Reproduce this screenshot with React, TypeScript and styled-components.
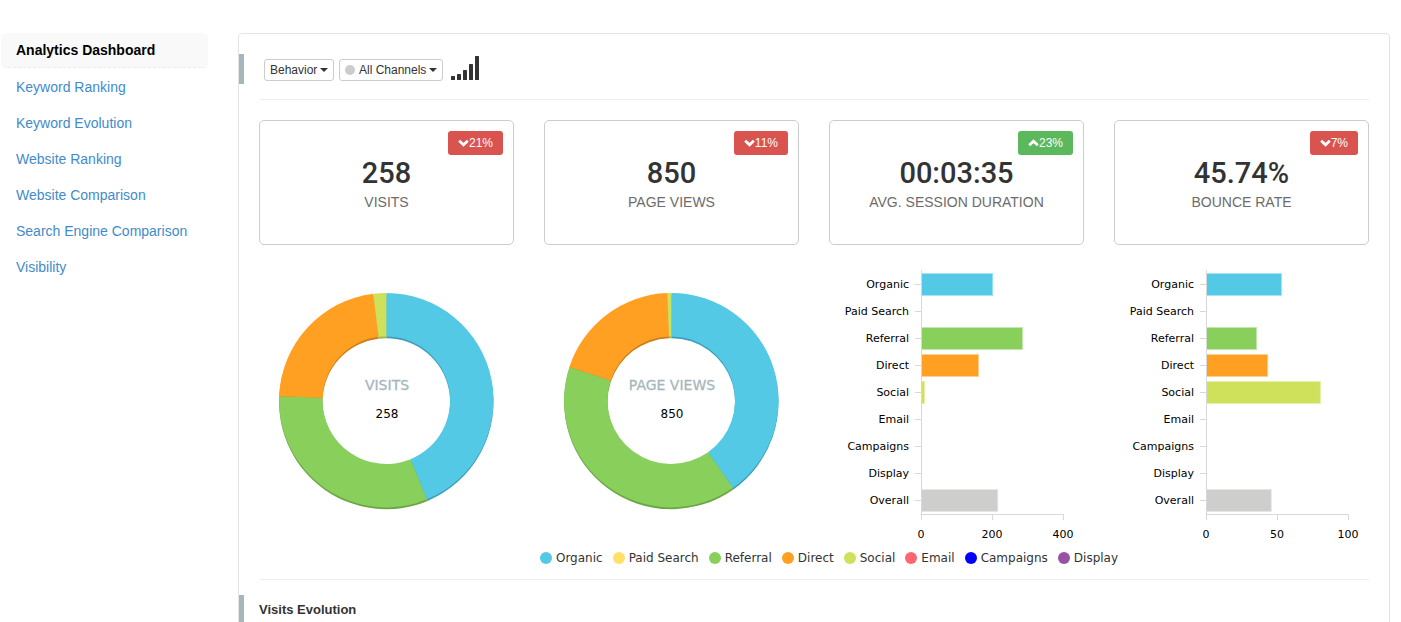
import React from "react";
import styled, { createGlobalStyle } from "styled-components";

const colors = {
  organic: "#53c9e6",
  paid: "#ffe168",
  referral: "#88cf5c",
  direct: "#ffa022",
  social: "#cfe05b",
  email: "#ff6672",
  campaigns: "#0000ff",
  display: "#9752a3",
  overall: "#cececc",
  slate: "#a5b7bd",
  axis: "#d8d8d8",
};

const chartFont = '"DejaVu Sans", Verdana, sans-serif';

const GlobalStyle = createGlobalStyle`
  *, *::before, *::after { box-sizing: border-box; }
  body {
    margin: 0;
    background: #fff;
    color: #333;
    font: 14px/20px "Liberation Sans", Arial, sans-serif;
  }
`;

const Shell = styled.div`
  display: flex;
  height: 100vh;
  overflow-y: auto;
  scrollbar-width: none;
  padding: 33px 11px 0 1px;
  gap: 30px;
`;

const Sidebar = styled.nav`
  flex: 0 0 207px;
`;

const NavList = styled.ul`
  display: grid;
  gap: 1px;
  list-style: none;
  margin: 0;
  padding: 0;
`;

const NavLink = styled.a<{ $active?: boolean }>`
  display: flex;
  align-items: center;
  height: 35px;
  padding: 0 15px;
  border-radius: 5px;
  border-bottom: ${(p) => (p.$active ? "1px dashed #ececec" : "0")};
  background: ${(p) => (p.$active ? "#f9f9f9" : "transparent")};
  color: ${(p) => (p.$active ? "#000" : "#428bca")};
  font-weight: ${(p) => (p.$active ? 700 : 400)};
  text-decoration: none;
`;

const Panel = styled.main`
  flex: 1;
  min-width: 0;
  height: max-content;
  padding: 20px 0;
  border: 1px solid #e4e4e4;
  border-radius: 4px;
`;

const SectionHead = styled.header`
  display: flex;
  align-items: center;
  min-height: 30px;
  padding-left: 15px;
  border-left: 5px solid ${colors.slate};
`;

const Toolbar = styled.div`
  display: flex;
  align-items: center;
  gap: 5px;
  padding: 2px 0 0 5px;
`;

const SectionTitle = styled.h2`
  margin: 0;
  font-size: 13px;
  line-height: 20px;
  font-weight: 700;
`;

const Divider = styled.hr`
  height: 1px;
  margin: 15px 20px;
  border: 0;
  background: #eee;
`;

const PickerBox = styled.label`
  display: flex;
  align-items: center;
  gap: 2px;
  height: 22px;
  padding: 0 5px;
  border: 1px solid #ccc;
  border-radius: 3px;
  background: #fff;
`;

const PickerSelect = styled.select`
  appearance: none;
  margin: 0;
  padding: 0;
  border: 0;
  background: transparent;
  color: #333;
  font: 12px/18px "Liberation Sans", Arial, sans-serif;
`;

const Dot = styled.span<{ $color: string; $size: number }>`
  flex: none;
  width: ${(p) => p.$size}px;
  height: ${(p) => p.$size}px;
  border-radius: 50%;
  background: ${(p) => p.$color};
`;

const PickerDot = styled(Dot)`
  margin-right: 2px;
`;

const SignalButton = styled.button`
  display: flex;
  margin-left: 3px;
  padding: 0;
  border: 0;
  background: none;
  color: #333;
`;

const Grid = styled.div`
  display: grid;
  grid-template-columns: repeat(4, minmax(0, 1fr));
  gap: 20px 30px;
  margin: 20px 20px 0;
`;

const Card = styled.section`
  position: relative;
  height: 125px;
  padding-top: 34px;
  border: 1px solid #ccc;
  border-radius: 5px;
  text-align: center;
`;

const CardValue = styled.div`
  font: 500 29px/36px Roboto, sans-serif;
`;

const CardLabel = styled.div`
  margin-top: 1px;
  color: #6c6c6c;
`;

const Badge = styled.span<{ $up?: boolean }>`
  position: absolute;
  top: 10px;
  right: 10px;
  display: flex;
  align-items: center;
  height: 24px;
  padding: 0 10px;
  border-radius: 3px;
  background: ${(p) => (p.$up ? "#5cb85c" : "#d9534f")};
  color: #fff;
  font-size: 12px;
`;

const ChartSvg = styled.svg`
  display: block;
  width: 100%;
  height: 280px;
  font-family: ${chartFont};
  font-size: 11px;
`;

const Legend = styled.ul`
  display: flex;
  flex-wrap: wrap;
  justify-content: center;
  gap: 4px 10px;
  list-style: none;
  margin: 6px 0 0;
  padding: 0 0 0 30px;
  font: 12px/14px ${chartFont};
`;

const LegendItem = styled.li`
  display: flex;
  align-items: center;
  gap: 4px;
`;

const LegendDivider = styled(Divider)`
  margin-top: 14px;
`;

function Picker({ label, options, dot }: { label: string; options: string[]; dot?: boolean }) {
  return (
    <PickerBox>
      {dot && <PickerDot $color="#ccc" $size={10} />}
      <PickerSelect aria-label={label}>
        {options.map((o) => (
          <option key={o}>{o}</option>
        ))}
      </PickerSelect>
      <svg width="8" height="4" viewBox="0 0 8 4" aria-hidden="true">
        <path d="M0 0h8L4 4z" fill="#333" />
      </svg>
    </PickerBox>
  );
}

const signalBars = [4, 6, 10, 16, 24];

function SignalIcon() {
  return (
    <svg width="28" height="28" viewBox="0 0 28 28" aria-hidden="true">
      {signalBars.map((h, i) => (
        <rect key={h} x={i * 6} y={24 - h} width="4" height={h} rx="0.5" fill="currentColor" />
      ))}
    </svg>
  );
}

function Chevron({ up }: { up?: boolean }) {
  return (
    <svg width="11" height="8" viewBox="0 0 11 8" aria-hidden="true">
      <path
        d={up ? "M1.2 6.2 5.5 2.2 9.8 6.2" : "M1.2 1.8 5.5 5.8 9.8 1.8"}
        fill="none"
        stroke="#fff"
        strokeWidth="2.8"
      />
    </svg>
  );
}

type Slice = { value: number; color: string; shade: string };

const makeSlices = (organic: number, referral: number, direct: number, social: number): Slice[] => [
  { value: organic, color: colors.organic, shade: "#3f9fb9" },
  { value: referral, color: colors.referral, shade: "#6ba646" },
  { value: direct, color: colors.direct, shade: "#cc7f18" },
  { value: social, color: colors.social, shade: "#a5b345" },
];

function ringPath(cx: number, cy: number, outer: number, inner: number, from: number, to: number) {
  const point = (r: number, f: number) => {
    const a = f * Math.PI * 2;
    return `${(cx + r * Math.sin(a)).toFixed(2)} ${(cy - r * Math.cos(a)).toFixed(2)}`;
  };
  const large = to - from > 0.5 ? 1 : 0;
  return `M${point(outer, from)}A${outer} ${outer} 0 ${large} 1 ${point(outer, to)}L${point(inner, to)}A${inner} ${inner} 0 ${large} 0 ${point(inner, from)}Z`;
}

function Donut({ title, total, slices }: { title: string; total: string; slices: Slice[] }) {
  const sum = slices.reduce((s, x) => s + x.value, 0);
  let acc = 0;
  const arcs = slices.map((s) => {
    const from = acc / sum;
    acc += s.value;
    return { ...s, from, to: acc / sum };
  });
  return (
    <ChartSvg viewBox="0 0 255 280" role="img" aria-label={`${title} by channel`}>
      {arcs.map((a) => (
        <path key={a.shade} d={ringPath(127.3, 137, 107.2, 63.8, a.from, a.to)} fill={a.shade} />
      ))}
      {arcs.map((a) => (
        <path key={a.color} d={ringPath(127.3, 135.2, 107.2, 63.8, a.from, a.to)} fill={a.color} />
      ))}
      <text x="128" y="125" textAnchor="middle" fontSize="14" fill={colors.slate} stroke={colors.slate} strokeWidth="0.3">
        {title}
      </text>
      <text x="128" y="153" textAnchor="middle" fontSize="12" fill="#000">
        {total}
      </text>
    </ChartSvg>
  );
}

const channels = [
  { name: "Organic", color: colors.organic },
  { name: "Paid Search", color: colors.paid },
  { name: "Referral", color: colors.referral },
  { name: "Direct", color: colors.direct },
  { name: "Social", color: colors.social },
  { name: "Email", color: colors.email },
  { name: "Campaigns", color: colors.campaigns },
  { name: "Display", color: colors.display },
];

const barRows = [...channels, { name: "Overall", color: colors.overall }];

function BarChart({ title, values, max }: { title: string; values: number[]; max: number }) {
  const left = 92.5;
  const span = 142;
  return (
    <ChartSvg viewBox="0 0 255 280" role="img" aria-label={title}>
      {barRows.map((row, i) => {
        const mid = 19.5 + i * 27;
        const width = (values[i] / max) * span;
        return (
          <g key={row.name}>
            <text x="80" y={mid + 3.5} textAnchor="end" fill="#000">
              {row.name}
            </text>
            <path d={`M86 ${mid}h6`} stroke={colors.axis} />
            {width > 0 && (
              <>
                <rect x={left} y={mid - 11.5} width={width} height="23" fill={row.color} opacity="0.5" />
                <rect x={left} y={mid - 10.5} width={width - 1} height="21" fill={row.color} />
              </>
            )}
          </g>
        );
      })}
      <path d={`M${left} 5V249.5M${left} 249.5H${left + span}`} stroke={colors.axis} fill="none" />
      {[0, 0.5, 1].map((f) => (
        <g key={f}>
          <path d={`M${left + span * f} 249v6`} stroke={colors.axis} />
          <text x={left - 0.5 + span * f} y="273" textAnchor="middle" fill="#000">
            {max * f}
          </text>
        </g>
      ))}
    </ChartSvg>
  );
}

const navItems = [
  "Analytics Dashboard",
  "Keyword Ranking",
  "Keyword Evolution",
  "Website Ranking",
  "Website Comparison",
  "Search Engine Comparison",
  "Visibility",
];

const metrics = [
  { value: "258", label: "VISITS", change: "21%", up: false },
  { value: "850", label: "PAGE VIEWS", change: "11%", up: false },
  { value: "00:03:35", label: "AVG. SESSION DURATION", change: "23%", up: true },
  { value: "45.74%", label: "BOUNCE RATE", change: "7%", up: false },
];

export default function App() {
  return (
    <>
      <GlobalStyle />
      <Shell>
        <Sidebar aria-label="Reports">
          <NavList>
            {navItems.map((item, i) => (
              <li key={item}>
                <NavLink href="#" $active={i === 0} aria-current={i === 0 ? "page" : undefined}>
                  {item}
                </NavLink>
              </li>
            ))}
          </NavList>
        </Sidebar>
        <Panel>
          <SectionHead>
            <Toolbar>
              <Picker label="Report" options={["Behavior"]} />
              <Picker label="Channel" options={["All Channels"]} dot />
              <SignalButton type="button" aria-label="Signal level">
                <SignalIcon />
              </SignalButton>
            </Toolbar>
          </SectionHead>
          <Divider />
          <Grid>
            {metrics.map((m) => (
              <Card key={m.label}>
                <Badge $up={m.up}>
                  <Chevron up={m.up} />
                  {m.change}
                </Badge>
                <CardValue>{m.value}</CardValue>
                <CardLabel>{m.label}</CardLabel>
              </Card>
            ))}
            <Donut title="VISITS" total="258" slices={makeSlices(113, 82, 58, 5)} />
            <Donut title="PAGE VIEWS" total="850" slices={makeSlices(342, 338, 165, 5)} />
            <BarChart
              title="Average session duration by channel"
              values={[202, 0, 286, 162, 10, 0, 0, 0, 216]}
              max={400}
            />
            <BarChart
              title="Bounce rate by channel"
              values={[53.2, 0, 35.6, 43.4, 80.6, 0, 0, 0, 46]}
              max={100}
            />
          </Grid>
          <Legend>
            {channels.map((c) => (
              <LegendItem key={c.name}>
                <Dot $color={c.color} $size={12} />
                {c.name}
              </LegendItem>
            ))}
          </Legend>
          <LegendDivider />
          <SectionHead>
            <SectionTitle>Visits Evolution</SectionTitle>
          </SectionHead>
        </Panel>
      </Shell>
    </>
  );
}
